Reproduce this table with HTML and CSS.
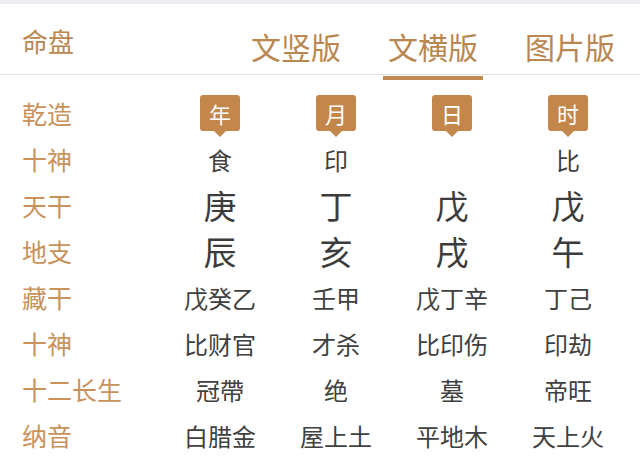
FILE: index.html
```html
<!DOCTYPE html>
<html lang="zh-CN">
<head>
<meta charset="utf-8">
<link rel="stylesheet" href="styles.css">
</head>
<body>
<div class="topstrip"></div>
<header class="header">
  <div class="title">命盘</div>
  <nav class="tabs">
    <span class="tab">文竖版</span>
    <span class="tab active">文横版</span>
    <span class="tab">图片版</span>
  </nav>
</header>
<main class="chart">
  <div class="label">乾造</div>
  <div class="cell"><span class="badge">年</span></div>
  <div class="cell"><span class="badge">月</span></div>
  <div class="cell"><span class="badge">日</span></div>
  <div class="cell"><span class="badge">时</span></div>

  <div class="label">十神</div>
  <div class="cell">食</div>
  <div class="cell">印</div>
  <div class="cell"></div>
  <div class="cell">比</div>

  <div class="label">天干</div>
  <div class="cell big">庚</div>
  <div class="cell big">丁</div>
  <div class="cell big">戊</div>
  <div class="cell big">戊</div>

  <div class="label">地支</div>
  <div class="cell big">辰</div>
  <div class="cell big">亥</div>
  <div class="cell big">戌</div>
  <div class="cell big">午</div>

  <div class="label">藏干</div>
  <div class="cell">戊癸乙</div>
  <div class="cell">壬甲</div>
  <div class="cell">戊丁辛</div>
  <div class="cell">丁己</div>

  <div class="label">十神</div>
  <div class="cell">比财官</div>
  <div class="cell">才杀</div>
  <div class="cell">比印伤</div>
  <div class="cell">印劫</div>

  <div class="label">十二长生</div>
  <div class="cell">冠帶</div>
  <div class="cell">绝</div>
  <div class="cell">墓</div>
  <div class="cell">帝旺</div>

  <div class="label">纳音</div>
  <div class="cell">白腊金</div>
  <div class="cell">屋上土</div>
  <div class="cell">平地木</div>
  <div class="cell">天上火</div>
</main>
</body>
</html>
```
FILE: styles.css
```css
* { box-sizing: border-box; }
html, body {
  margin: 0;
  padding: 0;
  background: #ffffff;
  font-family: "Noto Sans CJK SC", "Noto Sans", sans-serif;
  overflow: hidden;
}
.topstrip {
  height: 4px;
  background: #eeeef3;
}
.header {
  height: 71px;
  border-bottom: 1px solid #e3e3e6;
  display: flex;
  align-items: flex-start;
  justify-content: space-between;
  padding: 0 20px 0 22px;
}
.title {
  font-size: 26px;
  line-height: 26px;
  margin-top: 24px;
  color: #b9874f;
}
.tabs {
  display: flex;
  gap: 37px;
  margin-top: 27px;
}
.tab {
  position: relative;
  width: 100px;
  text-align: center;
  font-size: 30px;
  line-height: 30px;
  color: #b9874f;
}
.tab.active::after {
  content: "";
  position: absolute;
  left: 0;
  right: 0;
  top: 45px;
  height: 4px;
  background: #c08b50;
}
.chart {
  display: grid;
  grid-template-columns: 140px repeat(4, 116px);
  grid-auto-rows: 46px;
  padding: 15px 0 0 22px;
}
.label {
  display: flex;
  align-items: center;
  font-size: 25px;
  color: #c8925a;
  white-space: nowrap;
}
.cell {
  display: flex;
  align-items: center;
  justify-content: center;
  font-size: 24px;
  color: #404040;
}
.cell.big {
  font-size: 33px;
  color: #3c3c3c;
}
.badge {
  position: relative;
  width: 40px;
  height: 36px;
  border-radius: 3px;
  background: #c4874b;
  color: #ffffff;
  font-size: 22px;
  line-height: 36px;
  text-align: center;
}
.badge::after {
  content: "";
  position: absolute;
  left: 50%;
  bottom: -6px;
  margin-left: -6px;
  border-left: 6px solid transparent;
  border-right: 6px solid transparent;
  border-top: 6px solid #c4874b;
}
```
